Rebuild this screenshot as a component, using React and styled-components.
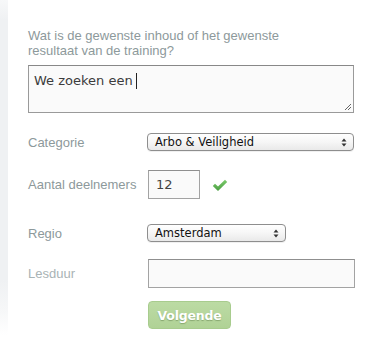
import React from "react";
import styled, { createGlobalStyle } from "styled-components";

const Global = createGlobalStyle`
  html, body { margin: 0; padding: 0; background: #fff; }
  body { font-family: "Liberation Sans", Arial, sans-serif; }
`;

const Page = styled.div`
  display: flex;
  width: 381px;
  height: 357px;
  background: #fff;
`;

const Rail = styled.div`
  width: 8px;
  flex: none;
  background: linear-gradient(
    to bottom,
    #f7f8f9 0px,
    #eff1f3 20px,
    #eff1f3 280px,
    #f6f7f8 310px,
    #ffffff 335px
  );
`;

const Form = styled.div`
  display: flex;
  flex-direction: column;
  padding: 28px 0 0 20px;
`;

const Question = styled.div`
  font-size: 13px;
  line-height: 15px;
  color: #8d999b;
  width: 300px;
`;

const TextBox = styled.div`
  position: relative;
  box-sizing: border-box;
  margin-top: 7px;
  width: 326px;
  height: 48px;
  border: 1px solid #9a9a9a;
  border-top-color: #888;
  background: #fafafa;
  padding: 7px 0 0 5px;
  font-family: "DejaVu Sans", Verdana, sans-serif;
  font-size: 13px;
  line-height: 16px;
  color: #3c3c3c;
`;

const Caret = styled.span`
  display: inline-block;
  width: 1px;
  height: 16px;
  background: #222;
  vertical-align: top;
  margin-left: 3px;
`;

const Grip = styled.svg`
  position: absolute;
  right: 1px;
  bottom: 1px;
`;

const Row = styled.div`
  display: flex;
  align-items: center;
  margin-top: ${(p) => p.$gap}px;
`;

const Label = styled.div`
  width: 120px;
  font-size: 13px;
  color: ${(p) => (p.$muted ? "#a9b3b5" : "#8d999b")};
`;

const Select = styled.div`
  box-sizing: border-box;
  display: flex;
  align-items: center;
  justify-content: space-between;
  width: ${(p) => p.$w}px;
  height: 18px;
  margin-left: -1px;
  padding: 0 6px 0 7px;
  border: 1px solid #8e8e8e;
  border-radius: 4px;
  background: linear-gradient(to bottom, #ffffff 0%, #f6f6f6 50%, #e9e9e9 100%);
  box-shadow: 0 1px 0 rgba(0, 0, 0, 0.06);
  font-family: "DejaVu Sans", Verdana, sans-serif;
  font-size: 11.5px;
  color: #111;
`;

const Input = styled.div`
  box-sizing: border-box;
  display: flex;
  align-items: center;
  width: ${(p) => p.$w}px;
  height: 29px;
  border: 1px solid #a3a3a3;
  border-top-color: #8f8f8f;
  background: #fafafa;
  padding-left: 7px;
  font-family: "DejaVu Sans", Verdana, sans-serif;
  font-size: 13px;
  color: #444;
`;

const Check = styled.svg`
  margin-left: 12px;
  margin-top: 2px;
`;

const Button = styled.button`
  align-self: flex-start;
  margin: 13px 0 0 120px;
  box-sizing: border-box;
  width: 83px;
  height: 28px;
  border: 1px solid #a8cc8e;
  border-radius: 4px;
  background: linear-gradient(to bottom, #bcdba4 0%, #b0d296 100%);
  font-family: "DejaVu Sans", Verdana, sans-serif;
  font-weight: bold;
  font-size: 12.5px;
  color: #fff;
  text-shadow: 0 1px 1px rgba(80, 110, 60, 0.45);
  padding: 0;
  letter-spacing: -0.2px;
`;

const Arrows = () => (
  <svg width="6" height="9" viewBox="0 0 6 9">
    <path d="M0.5 3.5 L3 0.5 L5.5 3.5 Z" fill="#333" />
    <path d="M0.5 5.5 L3 8.5 L5.5 5.5 Z" fill="#333" />
  </svg>
);

export default function App() {
  return (
    <>
      <Global />
      <Page>
        <Rail />
        <Form>
          <Question>Wat is de gewenste inhoud of het gewenste resultaat van de training?</Question>
          <TextBox>
            We zoeken een<Caret />
            <Grip width="9" height="9" viewBox="0 0 9 9">
              <path d="M8 2 L2 8 M8 5 L5 8" stroke="#666" strokeWidth="1" />
            </Grip>
          </TextBox>

          <Row $gap={20}>
            <Label>Categorie</Label>
            <Select $w={207}>
              <span>Arbo &amp; Veiligheid</span>
              <Arrows />
            </Select>
          </Row>

          <Row $gap={19}>
            <Label>Aantal deelnemers</Label>
            <Input $w={52}>12</Input>
            <Check width="16" height="13" viewBox="0 0 16 13">
              <defs>
                <linearGradient id="g" x1="0" y1="0" x2="0" y2="1">
                  <stop offset="0" stopColor="#7ccb6c" />
                  <stop offset="1" stopColor="#4a9e42" />
                </linearGradient>
              </defs>
              <path d="M0.8 7 L3 4.8 L6 7.6 L13 0.8 L15.2 3 L6 12 Z" fill="url(#g)" />
            </Check>
          </Row>

          <Row $gap={25}>
            <Label>Regio</Label>
            <Select $w={139}>
              <span>Amsterdam</span>
              <Arrows />
            </Select>
          </Row>

          <Row $gap={17}>
            <Label $muted>Lesduur</Label>
            <Input $w={207} />
          </Row>

          <Button>Volgende</Button>
        </Form>
      </Page>
    </>
  );
}
